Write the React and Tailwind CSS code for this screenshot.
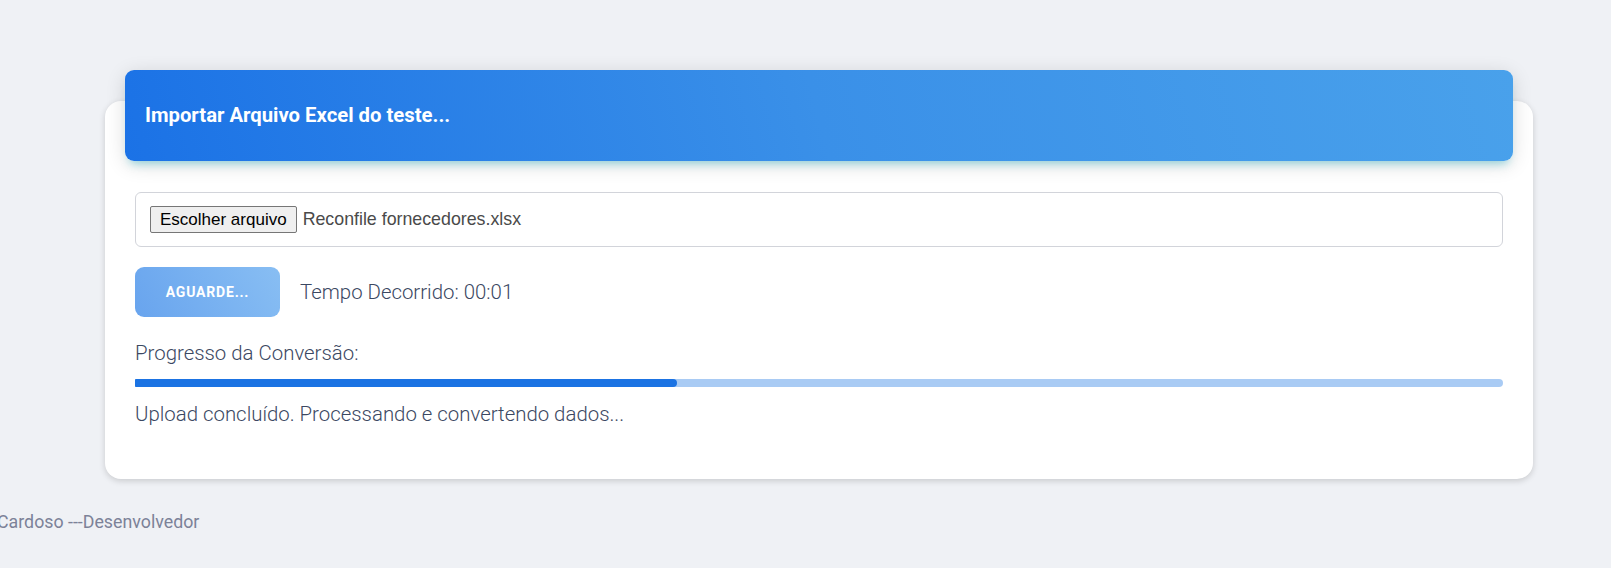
import React from "react";

export default function App() {
  return (
    <div className="min-h-screen w-full bg-[#eff1f5] pt-[101px] overflow-hidden" style={{ fontFamily: "Roboto, 'Liberation Sans', sans-serif" }}>
      <div className="ml-[105px] mr-[78px] bg-white rounded-[16px] shadow-[0_2px_6px_0_rgba(0,0,0,0.16)] flex flex-col">
        <div className="-mt-[31px] mx-[20px] h-[91px] rounded-[9px] bg-[linear-gradient(75deg,#1b72e6,#3a90e8_50%,#49a1eb)] shadow-[0_4px_20px_0_rgba(0,0,0,0.14),0_7px_10px_-5px_rgba(0,188,212,0.4)] flex items-center px-[20px]">
          <h2 className="text-white text-[20.3px] font-bold leading-none">Importar Arquivo Excel do teste...</h2>
        </div>
        <div className="px-[30px] pt-[31px] pb-[50px]">
          <div className="h-[55px] rounded-[6px] border border-[#d2d4da] flex items-center pl-[14px]" style={{ fontFamily: "'Liberation Sans', Arial, sans-serif" }}>
            <span className="h-[27px] px-[9px] flex items-center bg-[#efefef] border border-[#767676] rounded-[2px] text-[17px] text-black leading-none">Escolher arquivo</span>
            <span className="ml-[6px] text-[17.8px] text-[#4a4a4a] leading-none">Reconfile fornecedores.xlsx</span>
          </div>
          <div className="mt-[20px] flex items-center">
            <div className="w-[145px] h-[50px] rounded-[9px] bg-[linear-gradient(60deg,#68a4ee,#88bef3)] flex items-center justify-center">
              <span className="text-white text-[14px] font-bold tracking-[0.8px] leading-none">AGUARDE...</span>
            </div>
            <span className="ml-[20px] text-[20.4px] font-light text-[#3b4862] leading-[30px]">Tempo Decorrido: 00:01</span>
          </div>
          <div className="mt-[21px] text-[20.4px] font-light text-[#3b4862] leading-[30px]">Progresso da Conversão:</div>
          <div className="mt-[11px] h-[8px] w-full rounded-r-[4px] rounded-l-[1px] bg-[#a9cbf4] overflow-hidden">
            <div className="h-full bg-[#1b73e3] rounded-r-[4px]" style={{ width: "39.6%" }} />
          </div>
          <div className="mt-[12px] text-[20.4px] font-light text-[#3b4862] leading-[30px]">Upload concluído. Processando e convertendo dados...</div>
        </div>
      </div>
      <div className="mt-[29px] -ml-[3px] text-[17.8px] text-[#7c8298] leading-[27px]">Cardoso ---Desenvolvedor</div>
    </div>
  );
}
